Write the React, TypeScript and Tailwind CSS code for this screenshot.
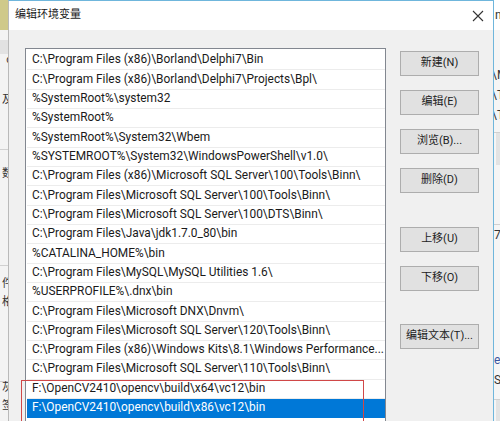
import React from 'react';

const paths = [
  'C:\\Program Files (x86)\\Borland\\Delphi7\\Bin',
  'C:\\Program Files (x86)\\Borland\\Delphi7\\Projects\\Bpl\\',
  '%SystemRoot%\\system32',
  '%SystemRoot%',
  '%SystemRoot%\\System32\\Wbem',
  '%SYSTEMROOT%\\System32\\WindowsPowerShell\\v1.0\\',
  'C:\\Program Files (x86)\\Microsoft SQL Server\\100\\Tools\\Binn\\',
  'C:\\Program Files\\Microsoft SQL Server\\100\\Tools\\Binn\\',
  'C:\\Program Files\\Microsoft SQL Server\\100\\DTS\\Binn\\',
  'C:\\Program Files\\Java\\jdk1.7.0_80\\bin',
  '%CATALINA_HOME%\\bin',
  'C:\\Program Files\\MySQL\\MySQL Utilities 1.6\\',
  '%USERPROFILE%\\.dnx\\bin',
  'C:\\Program Files\\Microsoft DNX\\Dnvm\\',
  'C:\\Program Files\\Microsoft SQL Server\\120\\Tools\\Binn\\',
  'C:\\Program Files (x86)\\Windows Kits\\8.1\\Windows Performance...',
  'C:\\Program Files\\Microsoft SQL Server\\110\\Tools\\Binn\\',
  'F:\\OpenCV2410\\opencv\\build\\x64\\vc12\\bin',
  'F:\\OpenCV2410\\opencv\\build\\x86\\vc12\\bin',
];

const font = { fontFamily: 'Roboto, "Noto Sans CJK SC", sans-serif' };

function Btn({ label, className = '' }: { label: string; className?: string }) {
  return (
    <div
      className={`h-[25px] w-[79px] flex items-center justify-center bg-[#e1e1e1] border border-[#adadad] text-[11px] text-[#222] ${className}`}
    >
      {label}
    </div>
  );
}

export default function App() {
  return (
    <div className="w-[500px] h-[421px] overflow-hidden flex bg-[#f0f0f0]" style={font}>
      {/* window behind, left */}
      <div className="w-[8px] shrink-0 flex flex-col overflow-hidden bg-[#f3f3f3] text-[11px] text-[#333] leading-none">
        <div className="h-[30px] bg-[#cfc98a] shrink-0" />
        <div className="h-[10px] shrink-0" />
        <div className="h-[14px] shrink-0 bg-[#e2e2e2]" />
        <div className="h-[10px] shrink-0 flex items-center justify-end">
          <span className="-mr-[4px]">c</span>
        </div>
        <div className="h-[30px] shrink-0" />
        <div className="h-[16px] shrink-0 flex justify-end"><span className="-mr-[5px]">及</span></div>
        <div className="h-[40px] shrink-0 border-b border-[#d0d0d0]" />
        <div className="h-[18px] shrink-0" />
        <div className="h-[16px] shrink-0 flex justify-end"><span className="-mr-[5px]">数</span></div>
        <div className="h-[82px] shrink-0 border-b border-[#d0d0d0]" />
        <div className="h-[12px] shrink-0" />
        <div className="h-[18px] shrink-0 flex justify-end"><span className="-mr-[5px]">件</span></div>
        <div className="h-[18px] shrink-0 flex justify-end"><span className="-mr-[5px]">格</span></div>
        <div className="h-[68px] shrink-0 border-b border-[#d0d0d0]" />
        <div className="h-[18px] shrink-0 flex justify-end"><span className="-mr-[5px]">灰</span></div>
        <div className="h-[18px] shrink-0 flex justify-end"><span className="-mr-[5px]">签</span></div>
      </div>

      {/* dialog */}
      <div className="w-[486px] shrink-0 flex flex-col border-l border-[#b9b9b9] border-r border-r-[#6fb6dc] border-t border-t-[#6fb6dc] bg-[#f0f0f0]">
        <div className="h-[29px] shrink-0 bg-white flex items-center justify-between pl-[6px] pr-[8px]">
          <span className="text-[11px] text-[#1a1a1a]">编辑环境变量</span>
          <svg width="12" height="12" viewBox="0 0 12 12" className="mr-[1px]">
            <path d="M1 1 L11 11 M11 1 L1 11" stroke="#333" strokeWidth="1.1" fill="none" />
          </svg>
        </div>
        <div className="flex pt-[18px] pl-[16px] gap-[14px]">
          <div className="relative w-[361px] shrink-0">
            <div className="h-[400px] bg-white border border-[#828790] pt-[2px] pl-[1px]">
              {paths.map((p, i) => {
                const sel = i === paths.length - 1;
                return (
                  <div
                    key={i}
                    className={`h-[19.33px] flex items-center pl-[5px] whitespace-nowrap overflow-hidden text-[11.9px] border-b ${
                      sel ? 'bg-[#0078d7] text-white border-[#0078d7]' : 'text-[#1a1a1a] border-[#ececec]'
                    }`}
                  >
                    {p}
                  </div>
                );
              })}
            </div>
            {/* red annotation box */}
            <div className="absolute left-[-4px] top-[332px] w-[343px] h-[60px] border border-[#d04848]" />
          </div>
          <div className="flex flex-col pt-[3px]">
            <Btn label="新建(N)" />
            <Btn label="编辑(E)" className="mt-[14px]" />
            <Btn label="浏览(B)..." className="mt-[14px]" />
            <Btn label="删除(D)" className="mt-[14px]" />
            <Btn label="上移(U)" className="mt-[34px]" />
            <Btn label="下移(O)" className="mt-[14px]" />
            <Btn label="编辑文本(T)..." className="mt-[33px]" />
          </div>
        </div>
      </div>

      {/* window behind, right */}
      <div className="flex-1 flex flex-col overflow-hidden bg-[#f5f5f5] text-[12px] text-[#333] leading-none">
        <div className="h-[30px] shrink-0 bg-white flex items-center pl-[1px]">n</div>
        <div className="h-[35px] shrink-0" />
        <div className="h-[20px] shrink-0 flex items-center -ml-[2px]">\M</div>
        <div className="h-[20px] shrink-0 flex items-center -ml-[2px]">\T</div>
        <div className="h-[20px] shrink-0 flex items-center -ml-[2px]">\T</div>
        <div className="h-[8px] shrink-0 border-b border-[#d0d0d0]" />
        <div className="h-[32px] shrink-0 bg-[#e3e3e3] ml-[2px]" />
        <div className="h-[60px] shrink-0 border-b border-[#d0d0d0]" />
        <div className="h-[20px] shrink-0 flex items-center">7</div>
        <div className="h-[105px] shrink-0" />
        <div className="h-[20px] shrink-0 flex items-center text-[#3b55a0]">el</div>
        <div className="h-[20px] shrink-0 flex items-center">S</div>
        <div className="h-[10px] shrink-0 border-b border-[#d0d0d0]" />
        <div className="h-[30px] shrink-0 bg-[#e3e3e3] ml-[2px]" />
      </div>
    </div>
  );
}
